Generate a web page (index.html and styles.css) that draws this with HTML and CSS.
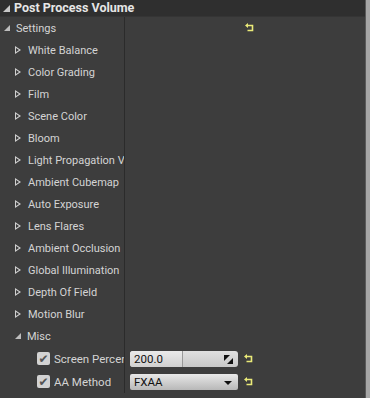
FILE: index.html
```html
<!DOCTYPE html>
<html lang="en">
<head>
    <meta charset="UTF-8">
    <title>Post Process Volume</title>
    <link rel="stylesheet" href="styles.css">
</head>
<body>
    <div class="panel">
        <div class="main">
            <div class="header">
                <span class="tri-down"></span>
                <span class="title">Post Process Volume</span>
            </div>
            <div class="rows">
                <div class="row">
                    <div class="name lvl0"><span class="tri-down small"></span>Settings</div>
                    <div class="value">
                        <svg class="reset settings-reset" width="9" height="9" viewBox="0 0 9 9"><polygon points="0,2.5 3,0 3,5" fill="#eaea78"/><path d="M3 2.5 H7.5 V7.5 H2.5" fill="none" stroke="#eaea78" stroke-width="1.6"/></svg>
                    </div>
                </div>
                <div class="row"><div class="name lvl1"><span class="tri-right"></span>White Balance</div><div class="value"></div></div>
                <div class="row"><div class="name lvl1"><span class="tri-right"></span>Color Grading</div><div class="value"></div></div>
                <div class="row"><div class="name lvl1"><span class="tri-right"></span>Film</div><div class="value"></div></div>
                <div class="row"><div class="name lvl1"><span class="tri-right"></span>Scene Color</div><div class="value"></div></div>
                <div class="row"><div class="name lvl1"><span class="tri-right"></span>Bloom</div><div class="value"></div></div>
                <div class="row"><div class="name lvl1"><span class="tri-right"></span>Light Propagation Volume</div><div class="value"></div></div>
                <div class="row"><div class="name lvl1"><span class="tri-right"></span>Ambient Cubemap</div><div class="value"></div></div>
                <div class="row"><div class="name lvl1"><span class="tri-right"></span>Auto Exposure</div><div class="value"></div></div>
                <div class="row"><div class="name lvl1"><span class="tri-right"></span>Lens Flares</div><div class="value"></div></div>
                <div class="row"><div class="name lvl1"><span class="tri-right"></span>Ambient Occlusion</div><div class="value"></div></div>
                <div class="row"><div class="name lvl1"><span class="tri-right"></span>Global Illumination</div><div class="value"></div></div>
                <div class="row"><div class="name lvl1"><span class="tri-right"></span>Depth Of Field</div><div class="value"></div></div>
                <div class="row"><div class="name lvl1"><span class="tri-right"></span>Motion Blur</div><div class="value"></div></div>
                <div class="row"><div class="name lvl1"><span class="tri-down small"></span>Misc</div><div class="value"></div></div>
                <div class="row prop">
                    <div class="name lvl2"><span class="check">✔</span><span class="label">Screen Percentage</span></div>
                    <div class="value">
                        <div class="slider">
                            <span class="fill">200.0</span>
                            <svg class="knob" width="9" height="9" viewBox="0 0 9 9"><polygon points="0,0 6,0 0,6" fill="#111"/><polygon points="9,3 9,9 3,9" fill="#111"/></svg>
                        </div>
                        <svg class="reset" width="9" height="9" viewBox="0 0 9 9"><polygon points="0,2.5 3,0 3,5" fill="#eaea78"/><path d="M3 2.5 H7.5 V7.5 H2.5" fill="none" stroke="#eaea78" stroke-width="1.6"/></svg>
                    </div>
                </div>
                <div class="row prop">
                    <div class="name lvl2"><span class="check">✔</span><span class="label">AA Method</span></div>
                    <div class="value">
                        <div class="combo">FXAA<span class="arrow"></span></div>
                        <svg class="reset" width="9" height="9" viewBox="0 0 9 9"><polygon points="0,2.5 3,0 3,5" fill="#eaea78"/><path d="M3 2.5 H7.5 V7.5 H2.5" fill="none" stroke="#eaea78" stroke-width="1.6"/></svg>
                    </div>
                </div>
            </div>
        </div>
        <div class="scroll"></div>
    </div>
</body>
</html>
```

FILE: styles.css
```css
body {
    margin: 0;
    background: #3d3d3d;
    font-family: Roboto, "Liberation Sans", sans-serif;
    font-size: 11px;
    color: #d4d4d4;
}
.panel {
    display: flex;
    width: 370px;
    height: 398px;
    overflow: hidden;
}
.main {
    flex: 1;
    display: flex;
    flex-direction: column;
}
.scroll {
    width: 4px;
    background: #a6a6a6;
    border-left: 1px solid #5a5a5a;
}
.header {
    height: 16px;
    background: #2f2f2f;
    display: flex;
    align-items: center;
    padding-left: 3px;
    border-bottom: 1px solid #353535;
}
.title {
    font-weight: bold;
    font-size: 12.5px;
    color: #e6e6e6;
    margin-left: 4px;
    margin-top: -2px;
}
.tri-down {
    width: 0;
    height: 0;
    border-left: 7px solid transparent;
    border-bottom: 7px solid #c8c8c8;
}
.tri-down.small {
    border-left-width: 6px;
    border-bottom-width: 6px;
    border-bottom-color: #bdbdbd;
    margin-right: 6px;
}
.tri-right {
    width: 0;
    height: 0;
    border-top: 4px solid transparent;
    border-bottom: 4px solid transparent;
    border-left: 6px solid #cfcfcf;
    margin-right: 7px;
    position: relative;
}
.tri-right::after {
    content: "";
    position: absolute;
    left: -5px;
    top: -2px;
    border-top: 2px solid transparent;
    border-bottom: 2px solid transparent;
    border-left: 3px solid #3d3d3d;
}
.rows {
    display: flex;
    flex-direction: column;
}
.row {
    display: flex;
    height: 22px;
}
.row.prop {
    height: 23px;
}
.name {
    width: 125px;
    display: flex;
    align-items: center;
    white-space: nowrap;
    overflow: hidden;
    border-right: 1px solid #2b2b2b;
    box-sizing: border-box;
}
.lvl0 { padding-left: 4px; }
.lvl1 { padding-left: 15px; }
.lvl2 { padding-left: 37px; }
.label {
    font-size: 11.5px;
    overflow: hidden;
}
.value {
    flex: 1;
    display: flex;
    align-items: center;
    padding-left: 5px;
}
.reset {
    margin-left: 6px;
    margin-top: -1px;
}
.settings-reset {
    margin-left: 115px;
}
.check {
    flex: none;
    width: 13px;
    height: 13px;
    background: #d3d3d3;
    border-radius: 2px;
    color: #555;
    font-size: 12px;
    line-height: 14px;
    text-align: center;
    margin-right: 4px;
    font-family: "DejaVu Sans", sans-serif;
}
.slider {
    width: 108px;
    height: 16px;
    background: linear-gradient(#e0e0e0, #c8c8c8);
    border-radius: 3px;
    display: flex;
    align-items: center;
    position: relative;
    color: #111;
    font-size: 11.5px;
}
.fill {
    width: 48px;
    height: 16px;
    line-height: 16px;
    padding-left: 4px;
    background: linear-gradient(#eaeaea, #d0d0d0);
    border-right: 1px solid #999;
    border-radius: 3px 0 0 3px;
}
.knob {
    position: absolute;
    right: 5px;
    top: 4px;
}
.combo {
    width: 104px;
    height: 16px;
    line-height: 16px;
    padding-left: 4px;
    background: linear-gradient(#e8e8e8, #b8b8b8);
    border-radius: 2px;
    color: #111;
    font-size: 11.5px;
    position: relative;
}
.arrow {
    position: absolute;
    right: 6px;
    top: 7px;
    border-left: 4px solid transparent;
    border-right: 4px solid transparent;
    border-top: 4px solid #111;
}
```
